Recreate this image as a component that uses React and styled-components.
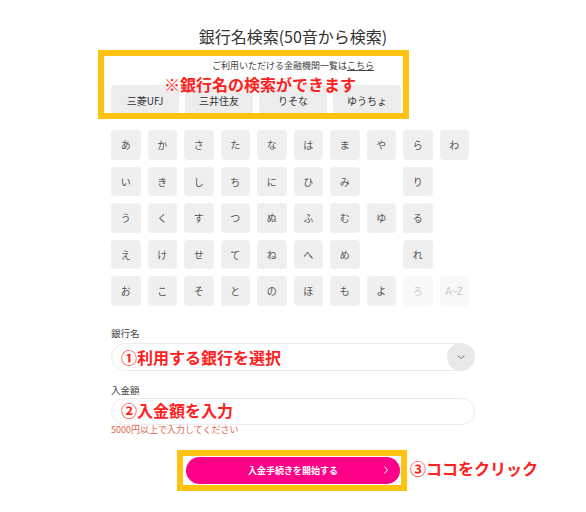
import React from 'react';
import styled, { createGlobalStyle } from 'styled-components';

const GlobalStyle = createGlobalStyle`
  html, body {
    margin: 0;
    padding: 0;
    background: #fff;
  }
  body {
    font-family: "Noto Sans CJK JP", "Noto Sans", sans-serif;
    color: #333;
  }
`;

const Page = styled.div`
  position: relative;
  width: 586px;
  height: 512px;
  display: flex;
  flex-direction: column;
  align-items: center;
  padding-top: 26px;
  box-sizing: border-box;
`;

const Title = styled.h1`
  margin: 0;
  font-size: 16px;
  line-height: 20px;
  font-weight: 400;
  color: #333;
`;

const Notice = styled.p`
  margin: 15px 0 0;
  font-size: 9px;
  line-height: 10px;
  color: #444;
  a {
    color: #444;
    text-decoration: underline;
  }
`;

const Form = styled.div`
  width: 364px;
  display: flex;
  flex-direction: column;
`;

const BankRow = styled.div`
  display: flex;
  gap: 6px;
  margin-top: 14px;
`;

const BankButton = styled.button`
  width: 68px;
  height: 29px;
  border: none;
  border-radius: 4px;
  background: #ededed;
  color: #333;
  font-family: inherit;
  font-size: 10px;
  line-height: 11px;
  padding: 1px 0 0;
`;

const KanaGrid = styled.div`
  display: grid;
  grid-template-columns: repeat(10, 29.5px);
  grid-auto-rows: 29.5px;
  gap: 7px;
  margin-top: 16px;
`;

const KanaButton = styled.button`
  border: none;
  border-radius: 4px;
  padding: 0;
  font-family: inherit;
  font-size: 10px;
  background: ${(p) => (p.$disabled ? '#f8f8f8' : '#efefef')};
  color: ${(p) => (p.$disabled ? '#c8c8c8' : '#555')};
  visibility: ${(p) => (p.$empty ? 'hidden' : 'visible')};
`;

const Label = styled.label`
  font-size: 9.5px;
  line-height: 12px;
  color: #444;
  margin-top: ${(p) => p.$top}px;
`;

const Pill = styled.div`
  height: ${(p) => p.$h}px;
  margin-top: ${(p) => p.$top}px;
  border: 1px solid #ececec;
  border-radius: 14px;
  box-sizing: border-box;
  display: flex;
  align-items: center;
  justify-content: flex-end;
`;

const Toggle = styled.span`
  width: 28px;
  height: 28px;
  margin: -1px;
  border-radius: 50%;
  background: #e9e9e9;
  display: flex;
  align-items: center;
  justify-content: center;
`;

const Hint = styled.p`
  margin: 0;
  font-size: 9px;
  line-height: 9px;
  color: #e0684c;
`;

const Submit = styled.button`
  margin-top: 23px;
  width: 214px;
  height: 27px;
  border: none;
  border-radius: 14px;
  background: #ff0088;
  color: #fff;
  font-family: inherit;
  font-size: 9px;
  font-weight: 700;
  position: relative;
  display: flex;
  align-items: center;
  justify-content: center;
  padding: 0;
  svg {
    position: absolute;
    right: 10px;
    top: 50%;
    transform: translateY(-50%);
  }
`;

const Frame = styled.div`
  position: absolute;
  left: ${(p) => p.$x}px;
  top: ${(p) => p.$y}px;
  width: ${(p) => p.$w}px;
  height: ${(p) => p.$h}px;
  border: 6px solid #ffc20e;
  box-sizing: border-box;
  pointer-events: none;
`;

const Note = styled.span`
  position: absolute;
  left: ${(p) => p.$x}px;
  top: ${(p) => p.$y}px;
  font-size: 16px;
  line-height: 14px;
  font-weight: 700;
  color: #ff2020;
  white-space: nowrap;
`;

const rows = [
  ['あ', 'か', 'さ', 'た', 'な', 'は', 'ま', 'や', 'ら', 'わ'],
  ['い', 'き', 'し', 'ち', 'に', 'ひ', 'み', '', 'り', ''],
  ['う', 'く', 'す', 'つ', 'ぬ', 'ふ', 'む', 'ゆ', 'る', ''],
  ['え', 'け', 'せ', 'て', 'ね', 'へ', 'め', '', 'れ', ''],
  ['お', 'こ', 'そ', 'と', 'の', 'ほ', 'も', 'よ', 'ろ', 'A~Z'],
];

const disabled = ['ろ', 'A~Z'];

const Chevron = () => (
  <svg width="10" height="10" viewBox="0 0 10 10" fill="none">
    <path d="M1.5 3.5 L5 6.5 L8.5 3.5" stroke="#666" strokeWidth="0.9" />
  </svg>
);

export default function App() {
  return (
    <>
      <GlobalStyle />
      <Page>
        <Title>銀行名検索(50音から検索)</Title>
        <Notice>
          ご利用いただける金融機関一覧は<a href="#">こちら</a>
        </Notice>
        <Form>
          <BankRow>
            {['三菱UFJ', '三井住友', 'りそな', 'ゆうちょ'].map((b) => (
              <BankButton key={b}>{b}</BankButton>
            ))}
          </BankRow>
          <KanaGrid>
            {rows.flat().map((k, i) => (
              <KanaButton key={i} $empty={!k} $disabled={disabled.includes(k)}>
                {k}
              </KanaButton>
            ))}
          </KanaGrid>
          <Label $top={21}>銀行名</Label>
          <Pill $h={28} $top={4}>
            <Toggle>
              <Chevron />
            </Toggle>
          </Pill>
          <Label $top={13}>入金額</Label>
          <Pill $h={27} $top={2} />
          <Hint>5000円以上で入力してください</Hint>
        </Form>
        <Submit>
          入金手続きを開始する
          <svg width="8" height="10" viewBox="0 0 8 10" fill="none">
            <path d="M2.5 1.5 L5.5 5 L2.5 8.5" stroke="#fff" strokeWidth="1" />
          </svg>
        </Submit>

        <Frame $x={98} $y={50} $w={311} $h={69} />
        <Note $x={164} $y={77}>※銀行名の検索ができます</Note>
        <Note $x={121} $y={350}>①利用する銀行を選択</Note>
        <Note $x={121} $y={403}>②入金額を入力</Note>
        <Frame $x={177} $y={450} $w={230} $h={41} />
        <Note $x={410} $y={461}>③ココをクリック</Note>
      </Page>
    </>
  );
}
